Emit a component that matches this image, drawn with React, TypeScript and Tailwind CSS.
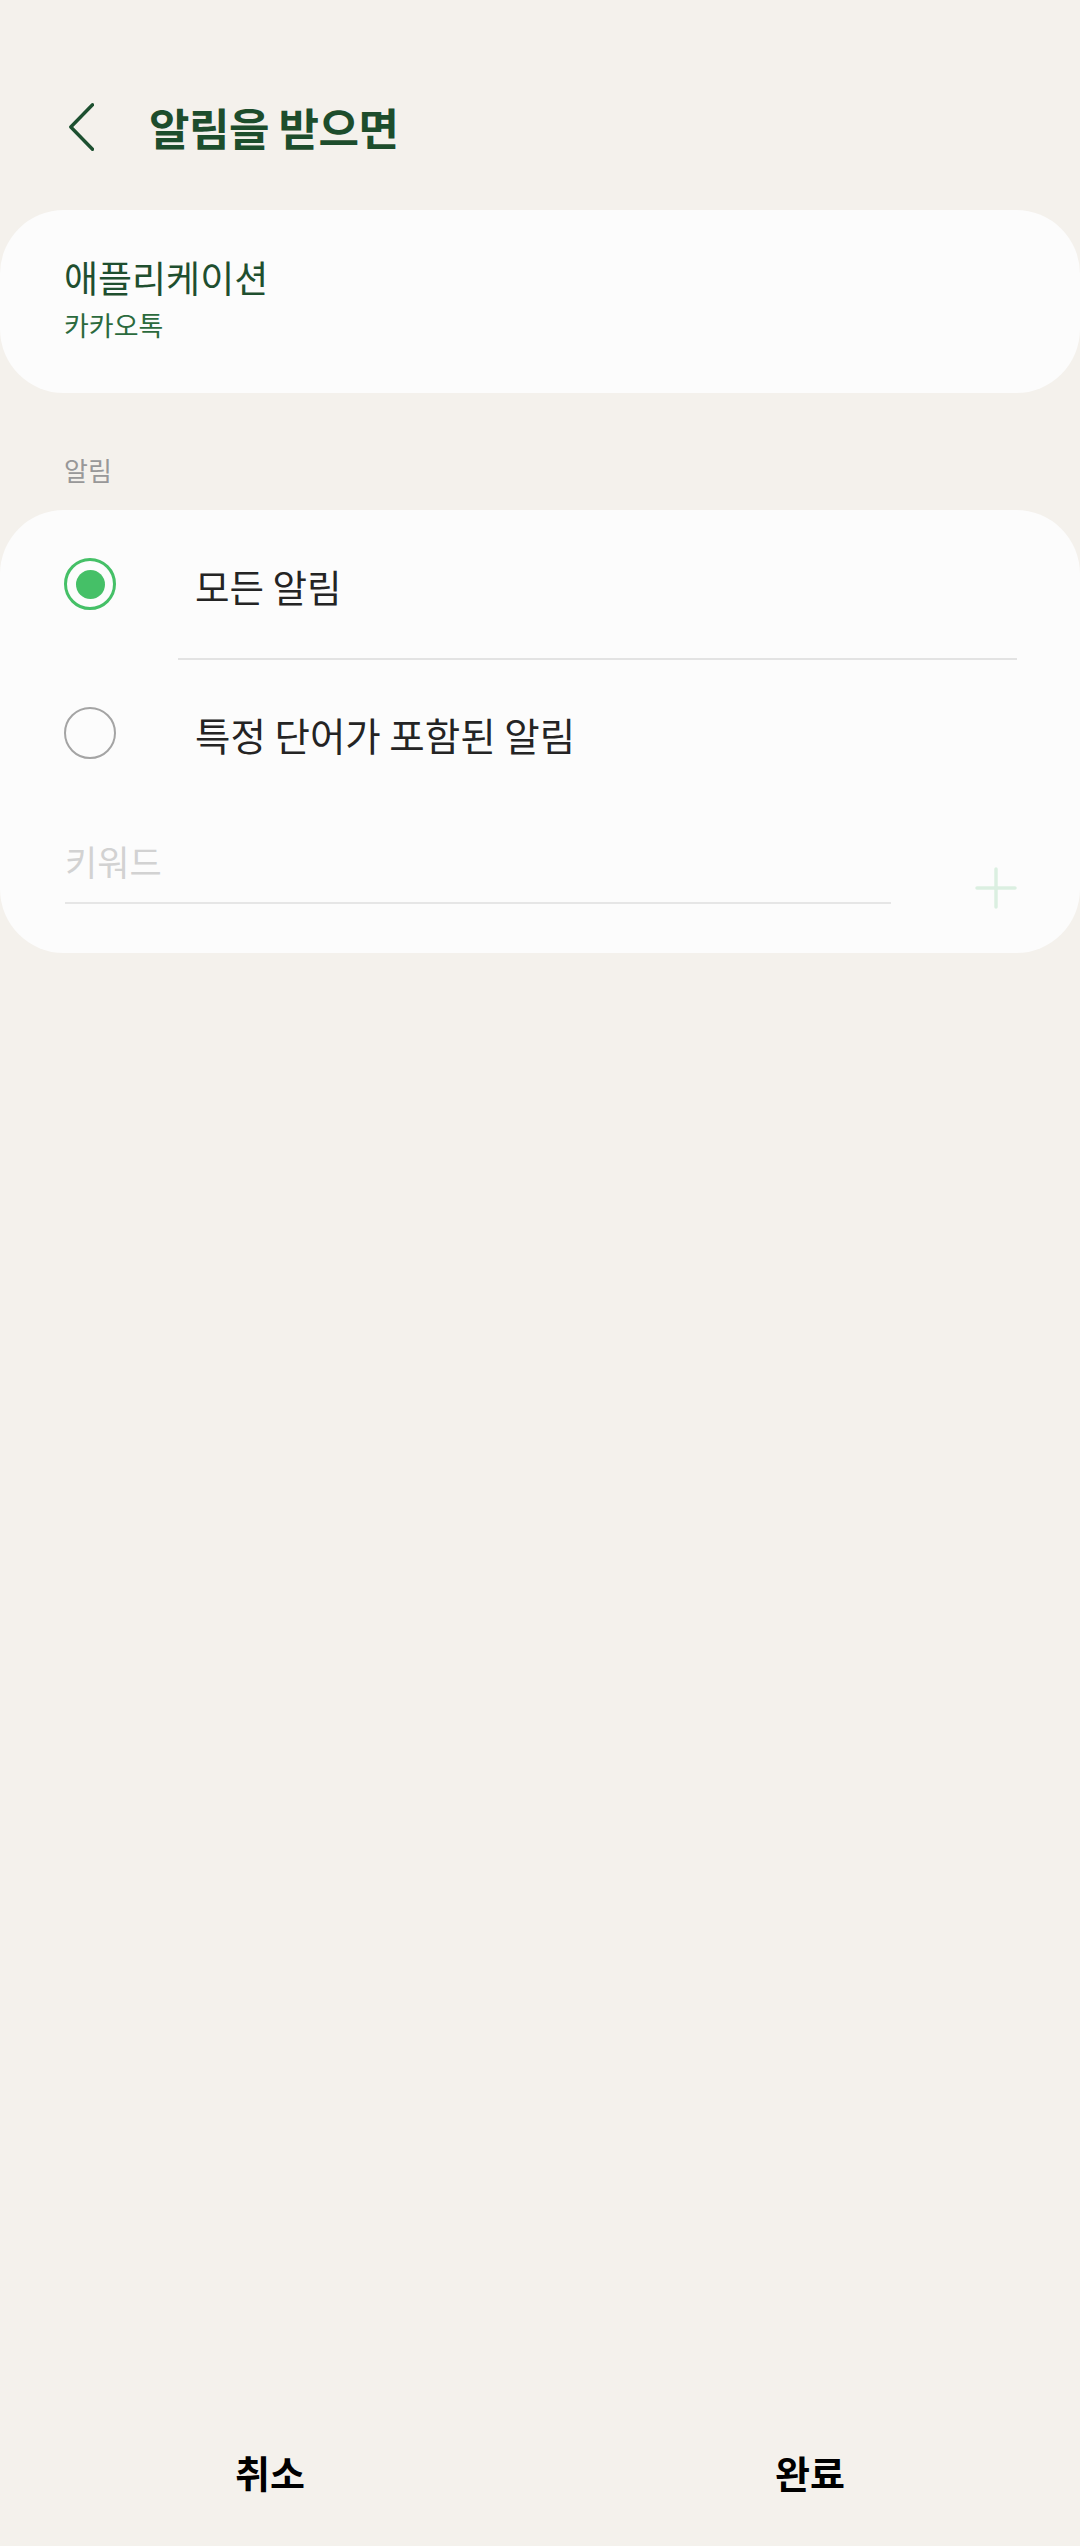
import React, { useState } from "react";

const font = "font-['Noto_Sans_CJK_KR','Noto_Sans',sans-serif]";

const Radio = ({ checked }: { checked: boolean }) => (
  <div
    className={`w-[52px] h-[52px] shrink-0 rounded-full flex items-center justify-center ${
      checked ? "border-[3px] border-[#45c067]" : "border-[2.5px] border-[#a4a4a4]"
    }`}
  >
    {checked && <div className="w-[29px] h-[29px] rounded-full bg-[#45c067]" />}
  </div>
);

const App = () => {
  const [mode, setMode] = useState("all");
  const [keyword, setKeyword] = useState("");

  return (
    <div className={`min-h-[2546px] bg-[#f4f1ec] flex flex-col ${font}`}>
      {/* header */}
      <div className="pt-[103px] pl-[69px] flex items-center h-[151px]">
        <button type="button" className="w-[25px] h-[48px] shrink-0">
          <svg width="25" height="48" viewBox="0 0 25 48" fill="none">
            <polyline
              points="23.5,1.8 1.8,24 23.5,46.2"
              stroke="#1d5030"
              strokeWidth="3.4"
              strokeLinecap="round"
              strokeLinejoin="round"
            />
          </svg>
        </button>
        <h1 className="ml-[55px] text-[44px] leading-[48px] font-bold text-[#1d4d2c] tracking-[-0.5px]">
          알림을 받으면
        </h1>
      </div>

      {/* app card */}
      <div className="mt-[59px] h-[183px] rounded-[64px] bg-[#fcfcfc] px-[64px] pt-[46px]">
        <p className="text-[37px] leading-[42px] text-[#1f4f2f]">애플리케이션</p>
        <p className="mt-[11px] text-[27px] leading-[32px] text-[#2b6a3d]">카카오톡</p>
      </div>

      <p className="mt-[61px] pl-[64px] text-[26px] leading-[32px] text-[#989898]">알림</p>

      {/* options card */}
      <div className="mt-[24px] rounded-[64px] bg-[#fcfcfc]">
        <div
          className="h-[148px] flex items-center pl-[64px] cursor-pointer"
          onClick={() => setMode("all")}
        >
          <Radio checked={mode === "all"} />
          <span className="ml-[79px] text-[37.5px] leading-[42px] text-[#242424] pt-[4px]">
            모든 알림
          </span>
        </div>
        <div className="ml-[178px] mr-[63px] h-[2px] bg-[#e3e3e3]" />
        <div
          className="h-[146px] flex items-center pl-[64px] cursor-pointer"
          onClick={() => setMode("word")}
        >
          <Radio checked={mode === "word"} />
          <span className="ml-[79px] text-[38.5px] leading-[42px] text-[#242424] pt-[2px]">
            특정 단어가 포함된 알림
          </span>
        </div>
        <div className="flex items-start pl-[65px] pr-[63px] pt-[34px] pb-[44px]">
          <div className="w-[826px]">
            <input
              type="text"
              value={keyword}
              onChange={(e) => setKeyword(e.target.value)}
              placeholder="키워드"
              className="w-full h-[42px] outline-none bg-transparent text-[35px] leading-[42px] text-[#242424] placeholder:text-[#d2d2d2]"
            />
            <div className="mt-[20px] h-[2px] bg-[#e6e6e6]" />
          </div>
          <button type="button" className="ml-auto mt-[27px] w-[42px] h-[42px]">
            <svg width="42" height="42" viewBox="0 0 42 42" fill="none">
              <path
                d="M21 2V40M2 21H40"
                stroke="#dbefe1"
                strokeWidth="3.5"
                strokeLinecap="round"
              />
            </svg>
          </button>
        </div>
      </div>

      {/* bottom buttons */}
      <div className="mt-auto h-[150px] flex">
        <button type="button" className="flex-1 flex items-center justify-center text-[38px] font-bold text-black">
          취소
        </button>
        <button type="button" className="flex-1 flex items-center justify-center text-[38px] font-bold text-black">
          완료
        </button>
      </div>
    </div>
  );
};

export default App;
